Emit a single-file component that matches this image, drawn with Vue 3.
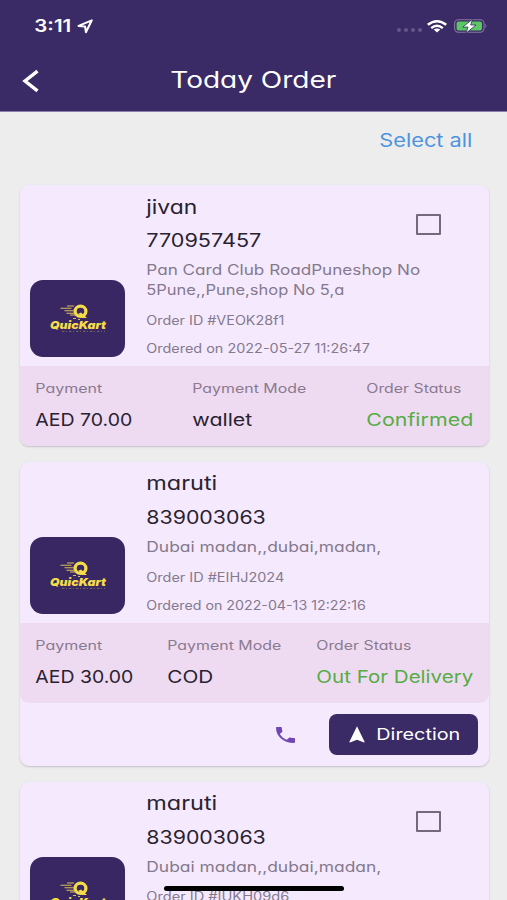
<script setup>
import { h } from 'vue'

// Wide-set label: svg text fitted to a fixed width, baseline near the box's bottom edge
const Label = (p) =>
  h('svg', { width: p.w, height: p.s, class: 'label' }, [
    h('text', { x: 0.3, y: p.s - 0.6, 'font-size': p.s, textLength: p.w, lengthAdjust: 'spacingAndGlyphs' }, p.t),
  ])
Label.props = ['t', 'w', 's']

const orders = [
  {
    name: ['jivan', 51], phone: ['770957457', 115],
    address: [['Pan Card Club RoadPuneshop No', 274], ['5Pune,,Pune,shop No 5,a', 198]],
    id: ['Order ID #VEOK28f1', 138], date: ['Ordered on 2022-05-27 11:26:47', 223.5],
    amount: ['AED 70.00', 97], mode: ['wallet', 60], status: ['Confirmed', 107],
    selectable: true, actions: false,
  },
  {
    name: ['maruti', 71], phone: ['839003063', 119.5],
    address: [['Dubai madan,,dubai,madan,', 235]],
    id: ['Order ID #EIHJ2024', 138], date: ['Ordered on 2022-04-13 12:22:16', 219.5],
    amount: ['AED 30.00', 98], mode: ['COD', 46], status: ['Out For Delivery', 157],
    selectable: false, actions: true,
  },
  {
    name: ['maruti', 71], phone: ['839003063', 119.5],
    address: [['Dubai madan,,dubai,madan,', 235]],
    id: ['Order ID #IUKH09d6', 143], date: ['Ordered on 2022-04-13 12:20:41', 219.5],
    amount: ['AED 30.00', 98], mode: ['COD', 46], status: ['Confirmed', 107],
    selectable: true, actions: false,
  },
]
</script>

<template>
  <div class="screen">
    <header class="top">
      <div class="status">
        <Label class="clock" t="3:11" :w="37" :s="17" />
        <svg class="loc" width="17" height="15" viewBox="0 0 17 15">
          <path d="M1.5 6.9 14.8 1.3 8.9 13.2 8.1 7.5Z" fill="none" stroke="#fff" stroke-width="2" stroke-linejoin="round" />
        </svg>
        <div class="indicators">
          <div class="dots"><i v-for="n in 4" :key="n"></i></div>
          <svg width="20" height="13" viewBox="0 0 20 13" fill="none" stroke="#fff" stroke-width="2.5">
            <path d="M.8 4.8Q10-2.4 19.2 4.8" />
            <path d="M4.2 8.1Q10 3.4 15.8 8.1" />
            <path d="M6.7 9.6Q10 7.2 13.3 9.6L10 12.6Z" fill="#fff" stroke="none" />
          </svg>
          <svg class="battery" width="34" height="14" viewBox="0 0 34 14">
            <rect x=".6" y=".8" width="29.4" height="12.4" rx="3.6" fill="none" stroke="#83799d" stroke-width="1.1" />
            <path d="M31.3 4.8Q33.4 7 31.3 9.2Z" fill="#83799d" />
            <rect x="2.6" y="2.4" width="25.4" height="9.2" rx="2" fill="#5bc663" />
            <path d="M18.5 .2 8.8 8.1h5.2l-1.9 6 9.9-8.1h-5.3Z" fill="#fff" stroke="#3a2a65" stroke-width=".8" />
          </svg>
        </div>
      </div>
      <div class="bar">
        <svg class="back" width="18" height="24" viewBox="0 0 18 24">
          <path d="M15.5 2.2 3 12 15.5 21.8" fill="none" stroke="#fff" stroke-width="3.4" />
        </svg>
        <Label class="title" t="Today Order" :w="166" :s="22.5" />
      </div>
    </header>

    <div class="select"><Label t="Select all" :w="93" :s="18.5" /></div>

    <main class="list">
      <article v-for="(o, i) in orders" :key="i" class="card">
        <div class="body">
          <div class="logo">
            <svg width="58" height="34" viewBox="0 0 58 34">
              <ellipse cx="31.5" cy="9.3" rx="5.4" ry="5.1" fill="none" stroke="#f5dc4b" stroke-width="3.3" />
              <path d="M32 10.5 38 16h-4.6l-4-4.2Z" fill="#f5dc4b" />
              <path d="M11.5 6.3h11M15.5 8.8h9M18 4h7M17.5 11.2h8M21 13h6M24 16.5h3M29 17.5h2" fill="none" stroke="#d8bd55" stroke-width="1.1" />
              <text class="brand" x="1" y="27" textLength="56" lengthAdjust="spacingAndGlyphs">QuicKart</text>
              <path d="M13 29.4h43" stroke="#8b7b62" stroke-width=".8" stroke-dasharray="2.5 1.5 1 2" />
            </svg>
          </div>
          <div class="info">
            <Label class="name" :t="o.name[0]" :w="o.name[1]" :s="19" />
            <Label class="phone" :t="o.phone[0]" :w="o.phone[1]" :s="18.5" />
            <div class="address">
              <Label v-for="a in o.address" :key="a[0]" :t="a[0]" :w="a[1]" :s="14.5" />
            </div>
            <Label class="oid" :t="o.id[0]" :w="o.id[1]" :s="12.5" />
            <Label class="date" :t="o.date[0]" :w="o.date[1]" :s="12.5" />
          </div>
          <div v-if="o.selectable" class="check"></div>
        </div>
        <div class="band">
          <div class="col">
            <Label class="cap" t="Payment" :w="67" :s="12.5" />
            <Label :t="o.amount[0]" :w="o.amount[1]" :s="17.5" />
          </div>
          <div class="col">
            <Label class="cap" t="Payment Mode" :w="114" :s="12.5" />
            <Label :t="o.mode[0]" :w="o.mode[1]" :s="17.5" />
          </div>
          <div class="col">
            <Label class="cap" t="Order Status" :w="95" :s="12.5" />
            <Label class="ok" :t="o.status[0]" :w="o.status[1]" :s="17.5" />
          </div>
        </div>
        <div v-if="o.actions" class="actions">
          <svg width="19" height="16" viewBox="3 3 18 18" preserveAspectRatio="none">
            <path fill="#7147b5" d="M6.62 10.79c1.44 2.83 3.76 5.14 6.59 6.59l2.2-2.2c.27-.27.67-.36 1.02-.24 1.12.37 2.33.57 3.57.57.55 0 1 .45 1 1V20c0 .55-.45 1-1 1-9.39 0-17-7.61-17-17 0-.55.45-1 1-1h3.5c.55 0 1 .45 1 1 0 1.25.2 2.45.57 3.57.11.35.03.74-.25 1.02l-2.2 2.2z" />
          </svg>
          <button class="go">
            <svg width="16" height="17" viewBox="0 0 16 17"><path d="M8 .3 15.7 16 15 16.6 8 13.7 1 16.6.3 16Z" fill="#fff" /></svg>
            <Label t="Direction" :w="84" :s="16.5" />
          </button>
        </div>
      </article>
    </main>
    <div class="home"></div>
  </div>
</template>

<style>
body { background: #ededed; overflow: hidden; }
</style>

<style scoped>
.screen {
  position: relative;
  width: 507px;
  height: 900px;
  overflow: hidden;
  box-sizing: border-box;
  background: #ededed;
  font-family: Inter, "Open Sans", sans-serif;
  font-feature-settings: "cv11";
}
svg { display: block; flex: none; overflow: visible; }
.label { fill: #2a2230; }
.top { height: 112px; background: #3a2a65; border-bottom: 1px solid #8b80ac; box-sizing: border-box; }
.status { display: flex; align-items: flex-start; height: 54px; box-sizing: border-box; padding: 16px 19px 0 34px; }
.status .clock { fill: #fff; font-weight: 600; }
.loc { margin: 3px 0 0 6px; }
.indicators { display: flex; align-items: center; margin: 3px 0 0 auto; }
.dots { display: flex; gap: 3px; margin: 8px 5px 0 0; }
.dots i { width: 4px; height: 4px; border-radius: 50%; background: #65588a; }
.battery { margin-left: 7px; }
.bar { display: flex; align-items: flex-start; padding: 12px 0 0 22px; }
.back { margin-top: 3px; }
.title { fill: #fff; margin-left: 130px; }
.select { display: flex; justify-content: flex-end; padding: 16.5px 35px 0 0; height: 56.9px; font-feature-settings: normal; }
.select .label { fill: #4d94de; }
.list { display: flex; flex-direction: column; gap: 15.5px; padding: 0 18.5px 0 20px; }
.card { background: #f5eafd; border-radius: 9px; box-shadow: 0 1px 2px rgba(70, 50, 80, .24); }
.body { display: flex; align-items: flex-end; padding: 0 0 9px 10.3px; position: relative; }
.logo { width: 95px; height: 77px; border-radius: 13px; background: #382762; display: flex; align-items: center; justify-content: center; }
.logo svg { margin-top: 1px; }
.brand { font-size: 11px; font-weight: 900; font-style: italic; fill: #f5dc4b; }
.info { display: flex; flex-direction: column; padding: 10.3px 0 3.5px 20.3px; }
.phone { margin-top: 14.5px; }
.address { display: flex; flex-direction: column; gap: 5.3px; margin-top: 13.5px; }
.address .label, .oid, .date { fill: #85798d; }
.oid { margin: 17.3px 0 0 .5px; }
.date { margin-top: 16.2px; }
.check { position: absolute; right: 47.5px; top: 29px; width: 25px; height: 21px; box-sizing: border-box; border: 2px solid #76697f; border-radius: 1px; }
.band { display: flex; justify-content: space-between; height: 80px; box-sizing: border-box; padding: 14.5px 16px 0 14.7px; background: #eedbf1; border-radius: 0 0 9px 9px; }
.col { display: flex; flex-direction: column; gap: 15.5px; }
.cap { fill: #8a7a90; }
.ok { fill: #55ad44; }
.actions { display: flex; align-items: center; justify-content: flex-end; height: 63px; gap: 33.5px; padding-right: 11px; }
.go { display: flex; align-items: center; width: 149px; height: 41px; padding: 0 0 0 20px; gap: 11px; border: 0; border-radius: 8px; background: #3a2a65; font: inherit; }
.go .label { fill: #fff; margin-top: -5px; }
.home { position: absolute; left: 164px; top: 886px; width: 180px; height: 5px; border-radius: 3px; background: #000; }
</style>
